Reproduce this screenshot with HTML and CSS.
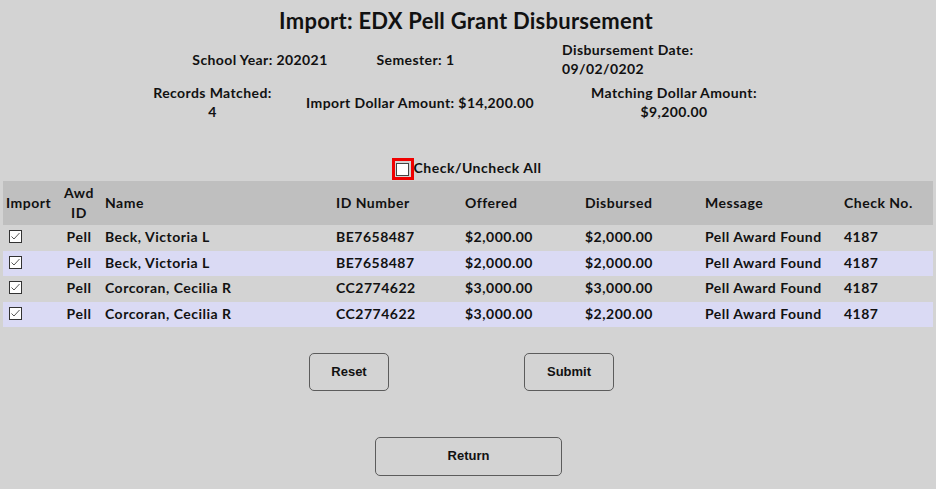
FILE: index.html
```html
<!DOCTYPE html>
<html>
<head>
<meta charset="utf-8">
<link rel="stylesheet" href="styles.css">
</head>
<body>
<div class="page">
  <h1 class="title">Import: EDX Pell Grant Disbursement</h1>

  <div class="info info-one">
    <div class="cell c-year">School Year: 202021</div>
    <div class="cell c-sem">Semester: 1</div>
    <div class="cell c-date">Disbursement Date:<br>09/02/0202</div>
  </div>

  <div class="info info-two">
    <div class="cell c-rec">Records Matched:<br>4</div>
    <div class="cell c-imp">Import Dollar Amount: $14,200.00</div>
    <div class="cell c-match">Matching Dollar Amount:<br>$9,200.00</div>
  </div>

  <div class="checkall">
    <span class="focus-ring"><span class="box"></span></span>
    <span class="checkall-label">Check/Uncheck All</span>
  </div>

  <table class="grid">
    <colgroup>
      <col class="w-imp"><col class="w-awd"><col class="w-name"><col class="w-id">
      <col class="w-off"><col class="w-dis"><col class="w-msg"><col class="w-chk">
    </colgroup>
    <thead>
      <tr>
        <th>Import</th><th class="center">Awd<br>ID</th><th>Name</th><th>ID Number</th>
        <th>Offered</th><th>Disbursed</th><th>Message</th><th>Check No.</th>
      </tr>
    </thead>
    <tbody>
      <tr>
        <td><span class="cb"><svg viewBox="0 0 13 13" width="13" height="13"><path d="M2.5 6.5 L5 9 L10.5 3" fill="none" stroke="#555" stroke-width="1"/></svg></span></td>
        <td class="center">Pell</td><td>Beck, Victoria L</td><td>BE7658487</td>
        <td>$2,000.00</td><td>$2,000.00</td><td>Pell Award Found</td><td>4187</td>
      </tr>
      <tr class="alt">
        <td><span class="cb"><svg viewBox="0 0 13 13" width="13" height="13"><path d="M2.5 6.5 L5 9 L10.5 3" fill="none" stroke="#555" stroke-width="1"/></svg></span></td>
        <td class="center">Pell</td><td>Beck, Victoria L</td><td>BE7658487</td>
        <td>$2,000.00</td><td>$2,000.00</td><td>Pell Award Found</td><td>4187</td>
      </tr>
      <tr>
        <td><span class="cb"><svg viewBox="0 0 13 13" width="13" height="13"><path d="M2.5 6.5 L5 9 L10.5 3" fill="none" stroke="#555" stroke-width="1"/></svg></span></td>
        <td class="center">Pell</td><td>Corcoran, Cecilia R</td><td>CC2774622</td>
        <td>$3,000.00</td><td>$3,000.00</td><td>Pell Award Found</td><td>4187</td>
      </tr>
      <tr class="alt">
        <td><span class="cb"><svg viewBox="0 0 13 13" width="13" height="13"><path d="M2.5 6.5 L5 9 L10.5 3" fill="none" stroke="#555" stroke-width="1"/></svg></span></td>
        <td class="center">Pell</td><td>Corcoran, Cecilia R</td><td>CC2774622</td>
        <td>$3,000.00</td><td>$2,200.00</td><td>Pell Award Found</td><td>4187</td>
      </tr>
    </tbody>
  </table>

  <div class="actions">
    <button class="btn btn-reset">Reset</button>
    <button class="btn btn-submit">Submit</button>
  </div>
  <div class="actions-return">
    <button class="btn btn-return">Return</button>
  </div>
</div>
</body>
</html>
```

FILE: styles.css
```css
html, body {
  margin: 0;
  padding: 0;
  background: #d3d3d3;
}
body {
  width: 936px;
  height: 489px;
  overflow: hidden;
  font-family: "Lato", "Open Sans", sans-serif;
  color: #111;
}
.page {
  display: flex;
  flex-direction: column;
}
.title {
  margin: 8px 0 0 0;
  font-size: 22px;
  line-height: 26px;
  font-weight: 700;
  letter-spacing: 0.25px;
  text-align: center;
  padding-right: 4px;
}
.info {
  display: flex;
  align-items: center;
  font-size: 14px;
  font-weight: 700;
  letter-spacing: 0.4px;
  line-height: 19px;
}
.info-one {
  height: 40px;
  margin-top: 5px;
}
.info-two {
  height: 40px;
  margin-top: 3px;
}
.c-year { margin-left: 180px; width: 160px; text-align: center; }
.c-sem { margin-left: 5px; width: 141px; text-align: center; }
.c-date { margin-left: 76px; text-align: left; }
.c-rec { margin-left: 142px; width: 141px; text-align: center; }
.c-imp { margin-left: 7px; width: 260px; text-align: center; }
.c-match { margin-left: 24px; width: 200px; text-align: center; }

.checkall {
  display: flex;
  justify-content: center;
  align-items: center;
  margin-top: 35px;
  height: 24px;
  padding-right: 3px;
}
.focus-ring {
  display: inline-flex;
  align-items: center;
  justify-content: center;
  width: 16px;
  height: 16px;
  border: 3px solid #f00000;
}
.box {
  width: 11px;
  height: 11px;
  background: #fff;
  border: 1px solid #444;
}
.checkall-label {
  font-size: 14px;
  font-weight: 700;
  letter-spacing: 0.5px;
  margin-bottom: 3px;
}

.grid {
  margin: 0 3px;
  width: 930px;
  border-collapse: collapse;
  table-layout: fixed;
  font-size: 14px;
  font-weight: 700;
  letter-spacing: 0.5px;
}
.w-imp { width: 53px; }
.w-awd { width: 46px; }
.w-name { width: 231px; }
.w-id { width: 129px; }
.w-off { width: 120px; }
.w-dis { width: 120px; }
.w-msg { width: 139px; }
.w-chk { width: 92px; }
.grid thead tr {
  background: #bfbfbf;
  height: 43px;
}
.grid th {
  text-align: left;
  font-weight: 700;
  padding: 2px 0 2px 3px;
  line-height: 20px;
}
.grid th.center, .grid td.center {
  text-align: center;
  padding-left: 0;
}
.grid tbody tr {
  height: 25.5px;
}
.grid td {
  padding: 0 0 1px 3px;
  line-height: 20px;
  white-space: nowrap;
}
.grid tr.alt {
  background: #dadaf4;
}
.cb {
  display: inline-block;
  width: 13px;
  height: 13px;
  margin-left: 3px;
  margin-top: 3px;
  background: #fff;
  border: 1px solid #333;
  box-sizing: border-box;
  vertical-align: top;
  position: relative;
}
.cb svg {
  position: absolute;
  left: -1px;
  top: -1px;
}

.actions {
  display: flex;
  margin-top: 26px;
}
.btn {
  font-family: "Liberation Sans", Arial, sans-serif;
  font-weight: 700;
  font-size: 13px;
  color: #111;
  background: transparent;
  border: 1px solid #5c5c5c;
  border-radius: 5px;
  padding: 0 0 2px 0;
}
.btn-reset {
  margin-left: 309px;
  width: 80px;
  height: 38px;
}
.btn-submit {
  margin-left: 135px;
  width: 90px;
  height: 38px;
}
.actions-return {
  display: flex;
  margin-top: 46px;
}
.btn-return {
  margin-left: 375px;
  width: 187px;
  height: 39px;
}
```
